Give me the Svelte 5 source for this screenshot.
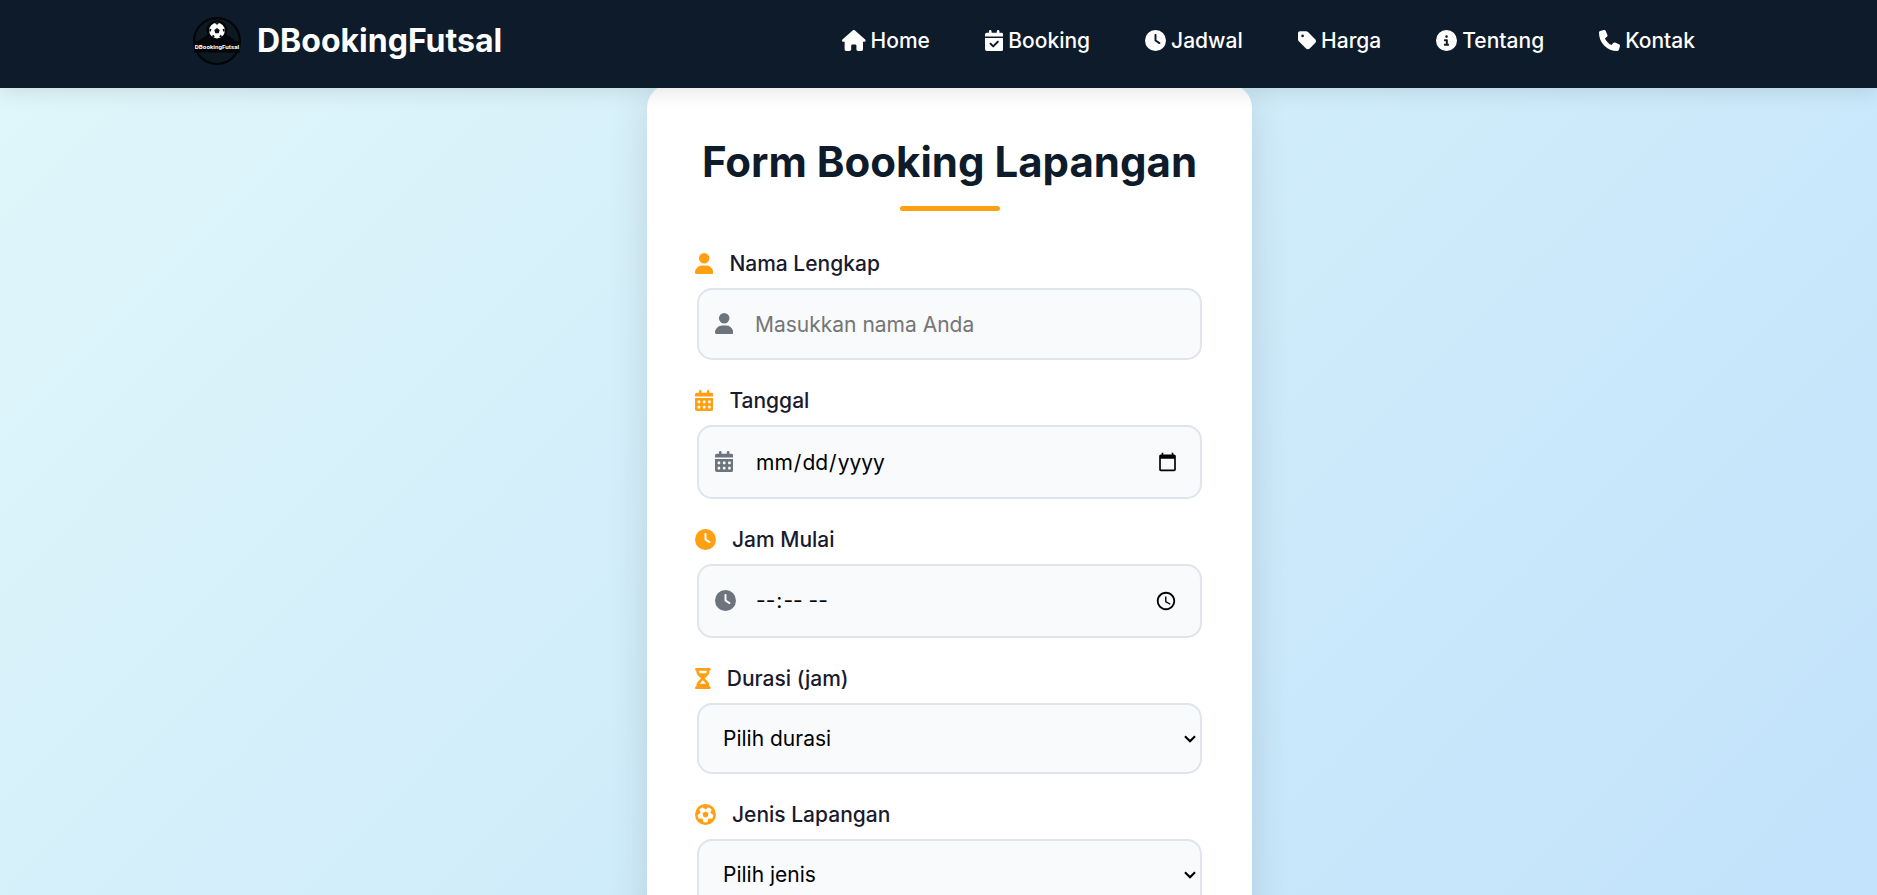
<script>
  const solid = {
    home: [576, 'M575.8 255.5c0 18-15 32.1-32 32.1h-32l.7 160.2c0 2.7-.2 5.4-.5 8.1V472c0 22.1-17.9 40-40 40H456c-1.1 0-2.2 0-3.3-.1c-1.4 .1-2.8 .1-4.2 .1H416 392c-22.1 0-40-17.9-40-40V448 384c0-17.7-14.3-32-32-32H256c-17.7 0-32 14.3-32 32v64 24c0 22.1-17.9 40-40 40H160 128.1c-1.5 0-3-.1-4.5-.2c-1.2 .1-2.4 .2-3.6 .2H104c-22.1 0-40-17.9-40-40V360c0-.9 0-1.9 .1-2.8V287.6H32c-18 0-32-14-32-32.1c0-9 3-17 10-24L266.4 8c7-7 15-8 22-8s15 2 21 7L564.8 231.5c8 7 12 15 11 24z'],
    check: [448, 'M128 0c17.7 0 32 14.3 32 32V64H288V32c0-17.7 14.3-32 32-32s32 14.3 32 32V64h48c26.5 0 48 21.5 48 48v48H0V112C0 85.5 21.5 64 48 64H96V32c0-17.7 14.3-32 32-32zM0 192H448V464c0 26.5-21.5 48-48 48H48c-26.5 0-48-21.5-48-48V192zM329 305c9.4-9.4 9.4-24.6 0-33.9s-24.6-9.4-33.9 0l-95 95-47-47c-9.4-9.4-24.6-9.4-33.9 0s-9.4 24.6 0 33.9l64 64c9.4 9.4 24.6 9.4 33.9 0L329 305z'],
    clock: [512, 'M256 0a256 256 0 1 1 0 512A256 256 0 1 1 256 0zM232 120V256c0 8 4 15.5 10.7 20l96 64c11 7.4 25.9 4.4 33.3-6.7s4.4-25.9-6.7-33.3L280 243.2V120c0-13.3-10.7-24-24-24s-24 10.7-24 24z'],
    tag: [448, 'M0 80V229.5c0 17 6.7 33.3 18.7 45.3l176 176c25 25 65.5 25 90.5 0L418.7 317.3c25-25 25-65.5 0-90.5l-176-176c-12-12-28.3-18.7-45.3-18.7H48C21.5 32 0 53.5 0 80zm112 32a32 32 0 1 1 0 64 32 32 0 1 1 0-64z'],
    info: [512, 'M256 512A256 256 0 1 0 256 0a256 256 0 1 0 0 512zM216 336h24V272H216c-13.3 0-24-10.7-24-24s10.7-24 24-24h48c13.3 0 24 10.7 24 24v88h8c13.3 0 24 10.7 24 24s-10.7 24-24 24H216c-13.3 0-24-10.7-24-24s10.7-24 24-24zm40-208a32 32 0 1 1 0 64 32 32 0 1 1 0-64z'],
    phone: [512, 'M164.9 24.6c-7.7-18.6-28-28.5-47.4-23.2l-88 24C12.1 30.2 0 46 0 64C0 311.4 200.6 512 448 512c18 0 33.8-12.1 38.6-29.5l24-88c5.3-19.4-4.6-39.7-23.2-47.4l-96-40c-16.3-6.8-35.2-2.1-46.3 11.6L304.7 368C234.3 334.7 177.3 277.7 144 207.3L193.3 167c13.7-11.2 18.4-30 11.6-46.3l-40-96z'],
    user: [448, 'M224 256A128 128 0 1 0 224 0a128 128 0 1 0 0 256zm-45.7 48C79.8 304 0 383.8 0 482.3C0 498.7 13.3 512 29.7 512H418.3c16.4 0 29.7-13.3 29.7-29.7C448 383.8 368.2 304 269.7 304H178.3z'],
    calendar: [448, 'M128 0c17.7 0 32 14.3 32 32V64H288V32c0-17.7 14.3-32 32-32s32 14.3 32 32V64h48c26.5 0 48 21.5 48 48v48H0V112C0 85.5 21.5 64 48 64H96V32c0-17.7 14.3-32 32-32zM0 192H448V464c0 26.5-21.5 48-48 48H48c-26.5 0-48-21.5-48-48V192z' + [272, 400].map((y) => [64, 192, 320].map((x) => `M${x} ${y}v32c0 8.8 7.2 16 16 16h32c8.8 0 16-7.2 16-16v-32c0-8.8-7.2-16-16-16h-32c-8.8 0-16 7.2-16 16z`).join('')).join('')],
    hourglass: [384, 'M32 0C14.3 0 0 14.3 0 32S14.3 64 32 64V75c0 42.4 16.9 83.1 46.9 113.1L146.7 256 78.9 323.9C48.9 353.9 32 394.6 32 437v11c-17.7 0-32 14.3-32 32s14.3 32 32 32H352c17.7 0 32-14.3 32-32s-14.3-32-32-32V437c0-42.4-16.9-83.1-46.9-113.1L237.3 256l67.9-67.9c30-30 46.9-70.7 46.9-113.1V64c17.7 0 32-14.3 32-32s-14.3-32-32-32H32zM96 75V64H288V75c0 19-5.6 37.4-16 53H112c-10.3-15.6-16-34-16-53zm16 309c3.5-5.3 7.6-10.3 12.1-14.9L192 301.3l67.9 67.9c4.6 4.6 8.6 9.6 12.1 14.9H112z'],
    ball: [512, 'M417.3 360.1l-71.6-4.8c-5.2-.3-10.3 1.1-14.5 4.2s-7.2 7.4-8.4 12.5l-17.6 69.6C289.5 445.8 273 448 256 448s-33.5-2.2-49.2-6.4L189.2 372c-1.3-5-4.3-9.4-8.4-12.5s-9.3-4.5-14.5-4.2l-71.6 4.8c-17.6-27.2-28.5-59.2-30.4-93.6L125 228.3c4.4-2.8 7.6-7 9.2-11.9s1.4-10.2-.5-15l-26.7-66.6C128 109.2 155.3 89 186.7 76.9l55.2 46c4 3.3 9 5.1 14.1 5.1s10.2-1.8 14.1-5.1l55.2-46c31.3 12.1 58.7 32.3 79.6 57.9l-26.7 66.6c-1.9 4.8-2.1 10.1-.5 15s4.9 9.1 9.2 11.9l60.7 38.2c-1.9 34.4-12.8 66.4-30.4 93.6zM256 512A256 256 0 1 0 256 0a256 256 0 1 0 0 512zm14.1-325.7c-8.4-6.1-19.8-6.1-28.2 0L194 221c-8.4 6.1-11.9 16.9-8.7 26.8l18.3 56.3c3.2 9.9 12.4 16.6 22.8 16.6h59.2c10.4 0 19.6-6.7 22.8-16.6l18.3-56.3c3.2-9.9-.3-20.7-8.7-26.8l-47.9-34.8z']
  };

  const links = [
    ['home', 'Home'],
    ['check', 'Booking'],
    ['clock', 'Jadwal'],
    ['tag', 'Harga'],
    ['info', 'Tentang'],
    ['phone', 'Kontak']
  ];

  const fields = [
    { id: 'nama', icon: 'user', label: 'Nama Lengkap', type: 'text', hint: 'Masukkan nama Anda' },
    { id: 'tanggal', icon: 'calendar', label: 'Tanggal', type: 'date' },
    { id: 'mulai', icon: 'clock', label: 'Jam Mulai', type: 'time' },
    { id: 'durasi', icon: 'hourglass', label: 'Durasi (jam)', first: 'Pilih durasi' },
    { id: 'jenis', icon: 'ball', label: 'Jenis Lapangan', first: 'Pilih jenis' }
  ];
</script>

{#snippet icon(name)}
  <svg class="icon" viewBox="0 0 {solid[name][0]} 512" aria-hidden="true">
    <path fill-rule="evenodd" d={solid[name][1]} />
  </svg>
{/snippet}

<div class="page">
  <header>
    <div class="bar">
      <a class="brand" href="#home">
        <svg class="logo" viewBox="0 0 46 46" aria-hidden="true">
          <circle cx="23" cy="23" r="22" fill="#0d1820" stroke="#020406" stroke-width="2" />
          <path d="M5 23Q12 18 15 17Q23 24 31 17Q35 18 41 23Z" fill="#030608" />
          <circle cx="23" cy="13" r="10" fill="#030608" />
          <circle cx="23" cy="13" r="7.5" fill="#fff" />
          <path d="M23 10.5l2.6 1.9-1 3.1h-3.2l-1-3.1zM23 5.4l2 .8-2 1.3-2-1.3zM15.8 11l1.9.8-.6 2.2-1.5 0zM30.2 11l-1.9.8.6 2.2 1.5 0zM18 18.4l1.4-1.5 1.4 1.6-.8 1.4zM28 18.4l-1.4-1.5-1.4 1.6.8 1.4z" fill="#111" />
          <path d="M1 23H45V34H1Z" fill="#030608" />
          <text x="23" y="31" text-anchor="middle">DBookingFutsal</text>
        </svg>
        <span>DBookingFutsal</span>
      </a>
      <nav>
        {#each links as [name, text]}
          <a href="#{text.toLowerCase()}">{@render icon(name)}{text}</a>
        {/each}
      </nav>
    </div>
  </header>

  <main>
    <form class="card">
      <h1>Form Booking Lapangan</h1>
      {#each fields as f}
        <div class="field">
          <label for={f.id}>{@render icon(f.icon)}{f.label}</label>
          {#if f.first}
            <select id={f.id}><option>{f.first}</option></select>
          {:else}
            <div class="box {f.type}">
              {@render icon(f.icon)}
              <input id={f.id} type={f.type} placeholder={f.hint} />
            </div>
          {/if}
        </div>
      {/each}
    </form>
  </main>
</div>

<style>
  :global(html) {
    scrollbar-width: none;
  }
  .page {
    min-height: 100vh;
    font-family: Inter, 'Open Sans', sans-serif;
    font-size: 21px;
    color: #1a1a2e;
    background: linear-gradient(135deg, #e0f7fa 0%, #bbdefb 115%);
  }
  .icon {
    height: 21px;
    flex: none;
    fill: currentColor;
  }
  header {
    position: sticky;
    top: 0;
    z-index: 2;
    padding-left: 22px;
    background: #0d1b2a;
    box-shadow: 0 4px 20px rgba(0, 0, 0, 0.1);
  }
  .bar {
    max-width: 1513px;
    height: 88px;
    margin: 0 auto;
    padding-bottom: 7px;
    box-sizing: border-box;
    display: flex;
    align-items: center;
    justify-content: space-between;
  }
  .brand {
    display: flex;
    align-items: center;
    gap: 16px;
    font-size: 32px;
    font-weight: 700;
    color: #fff;
    text-decoration: none;
  }
  .logo {
    width: 48px;
    height: 48px;
  }
  .logo text {
    font: 700 6px Roboto, sans-serif;
    fill: #fff;
  }
  nav {
    display: flex;
    gap: 55px;
    padding-right: 11px;
  }
  nav a {
    display: flex;
    align-items: center;
    gap: 5px;
    font-weight: 500;
    color: #fff;
    text-decoration: none;
  }
  main {
    padding: 0 0 40px 22px;
  }
  .card {
    box-sizing: border-box;
    max-width: 605px;
    margin: -4px auto 0;
    padding: 50px;
    background: #fff;
    border-radius: 24px;
    box-shadow: 0 10px 40px rgba(0, 0, 0, 0.12);
  }
  h1 {
    margin: 0 0 37px;
    font-size: 42px;
    line-height: 56px;
    font-weight: 700;
    color: #0d1b2a;
    text-align: center;
    white-space: nowrap;
  }
  h1::after {
    content: '';
    display: block;
    width: 100px;
    height: 5px;
    margin: 16px auto 0;
    border-radius: 3px;
    background: #ffa012;
  }
  .field {
    margin-bottom: 25px;
  }
  label {
    display: flex;
    align-items: center;
    gap: 16px;
    height: 30px;
    margin: 0 0 10px -2px;
    font-weight: 500;
  }
  label .icon {
    color: #ffa012;
  }
  .box {
    position: relative;
  }
  .box .icon {
    position: absolute;
    left: 18px;
    top: calc(50% - 11px);
    color: #6c757d;
  }
  input,
  select {
    box-sizing: border-box;
    display: block;
    width: 100%;
    height: 72px;
    padding: 0 20px;
    border: 2px solid #e0e4ec;
    border-radius: 15px;
    background: #f8fafc;
    font: inherit;
    color: #000;
  }
  input {
    padding-left: 56px;
  }
  .date input,
  .time input {
    height: 74px;
  }
  select {
    height: 71px;
    padding-left: 24px;
    appearance: none;
    background: #f8fafc url("data:image/svg+xml,%3Csvg xmlns='http://www.w3.org/2000/svg' width='12' height='8'%3E%3Cpath d='M1 1.2l5 5 5-5' fill='none' stroke='%23000' stroke-width='2.2'/%3E%3C/svg%3E") no-repeat right 4px center;
  }
  input::placeholder {
    color: #757575;
  }
</style>
